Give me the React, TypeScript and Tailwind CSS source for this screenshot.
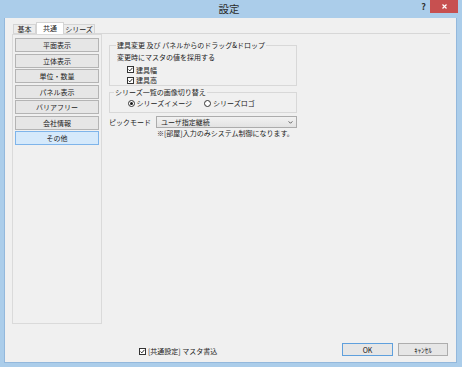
import React from 'react';

const menuItems = ['平面表示', '立体表示', '単位・数量', 'パネル表示', 'バリアフリー', '会社情報', 'その他'];

const CheckBox = () => (
  <span className="flex h-[7px] w-[7px] shrink-0 items-center justify-center border border-[#333] bg-white">
    <svg viewBox="0 0 7 7" className="h-[5px] w-[5px]">
      <path d="M0.8 3.6 L2.6 5.4 L6.2 1.2" fill="none" stroke="#1a1a1a" strokeWidth="1.3" />
    </svg>
  </span>
);

const Radio = ({ on }: { on?: boolean }) => (
  <span className="flex h-[7px] w-[7px] shrink-0 items-center justify-center rounded-full border border-[#333] bg-white">
    {on && <span className="h-[3px] w-[3px] rounded-full bg-[#1a1a1a]" />}
  </span>
);

export default function App() {
  return (
    <div className="flex h-[367px] w-[462px] flex-col bg-[#abcdea] font-['Noto_Sans_CJK_JP','Liberation_Sans',sans-serif] text-[7px] leading-[8px] text-[#1b1b1b]">
      {/* title bar */}
      <div className="relative flex h-[18px] items-center justify-center pr-[4px]">
        <span className="text-[10.5px] leading-[12px] text-[#2b2b2b]">設定</span>
        <span className="absolute right-[36px] top-[2px] text-[9px] font-bold leading-[10px] text-[#333]">?</span>
        <div className="absolute right-[4px] top-0 flex h-[13px] w-[28px] items-center justify-center bg-[#c75050]">
          <svg viewBox="0 0 6 6" className="h-[5px] w-[5px]">
            <path d="M0.6 0.6 L5.4 5.4 M5.4 0.6 L0.6 5.4" stroke="#fff" strokeWidth="1.4" />
          </svg>
        </div>
      </div>

      {/* dialog body */}
      <div className="mb-[4px] ml-[4px] mr-[5px] flex flex-1 flex-col border border-t-0 border-[#93b8dc] bg-[#f0f0f0]">
        {/* tabs */}
        <div className="relative z-10 mt-[4px] flex h-[11px] items-end pl-[8px]">
          <div className="flex h-[9px] w-[23px] items-center justify-center border border-b-0 border-[#d4d4d4] bg-[#ececec]">基本</div>
          <div className="-mb-[1px] flex h-[12px] w-[28px] items-center justify-center border border-b-0 border-[#d4d4d4] bg-white pb-[1px]">共通</div>
          <div className="flex h-[9px] w-[31px] items-center justify-center border border-b-0 border-l-0 border-[#d4d4d4] bg-[#ececec]">シリーズ</div>
        </div>

        {/* tab page */}
        <div className="ml-[8px] mr-[6px] flex border-t border-[#d7d7d7]">
          <div className="-ml-[1px] flex h-[290px] w-[90px] flex-col gap-[1.5px] border border-[#dadada] px-[2px] pt-[3px]">
            {menuItems.map((m) => (
              <div
                key={m}
                className={
                  m === 'その他'
                    ? 'flex h-[14px] items-center justify-center border border-[#7eb4ea] bg-[#d5e9fb]'
                    : 'flex h-[14px] items-center justify-center border border-[#b4b4b4] bg-[#e6e6e6]'
                }
              >
                {m}
              </div>
            ))}
          </div>

          <div className="ml-[7px] flex w-[188px] flex-col">
            <fieldset className="mt-[7px] border border-[#d8d8d8] pb-[1px] pl-[6px]">
              <legend className="px-[1px] leading-[8px]">建具変更 及び パネルからのドラッグ&amp;ドロップ</legend>
              <div className="ml-[1px] mt-[4px]">変更時にマスタの値を採用する</div>
              <div className="ml-[11px] mt-[4.5px] flex h-[8px] items-center gap-[2px]">
                <CheckBox />
                <span>建具幅</span>
              </div>
              <div className="ml-[11px] mt-[2.5px] flex h-[8px] items-center gap-[2px]">
                <CheckBox />
                <span>建具高</span>
              </div>
            </fieldset>

            <fieldset className="mt-[2px] border border-[#d8d8d8] pb-[5px] pl-[4px]">
              <legend className="px-[1px] leading-[8px]">シリーズ一覧の画像切り替え</legend>
              <div className="mt-[3px] flex h-[8px] items-center">
                <div className="ml-[14px] flex w-[76px] items-center gap-[1.5px]">
                  <Radio on />
                  <span>シリーズイメージ</span>
                </div>
                <div className="flex items-center gap-[2px]">
                  <Radio />
                  <span>シリーズロゴ</span>
                </div>
              </div>
            </fieldset>

            <div className="mt-[3px] flex h-[12px] items-center">
              <span className="w-[47px]">ピックモード</span>
              <div className="flex h-[12px] flex-1 items-center justify-between border border-[#acacac] bg-gradient-to-b from-[#f2f2f2] to-[#e3e3e3] pl-[4px] pr-[3px]">
                <span>ユーザ指定継続</span>
                <svg viewBox="0 0 6 4" className="h-[3px] w-[5px]">
                  <path d="M0.5 0.5 L3 3 L5.5 0.5" fill="none" stroke="#333" strokeWidth="1" />
                </svg>
              </div>
            </div>
            <div className="ml-[48px] mt-[1px]">※[部屋]入力のみシステム制御になります。</div>
          </div>
        </div>

        {/* bottom bar */}
        <div className="flex flex-1 items-end pb-[6px] pr-[8px]">
          <div className="mb-[1px] ml-[134px] flex h-[8px] items-center gap-[2px]">
            <CheckBox />
            <span>[共通設定] マスタ書込</span>
          </div>
          <div className="ml-auto flex gap-[5px]">
            <div className="flex h-[13px] w-[51px] items-center justify-center border border-[#5fa0dd] bg-[#e6e6e6]">OK</div>
            <div className="flex h-[13px] w-[50px] items-center justify-center border border-[#adadad] bg-[#e6e6e6]">ｷｬﾝｾﾙ</div>
          </div>
        </div>
      </div>
    </div>
  );
}
